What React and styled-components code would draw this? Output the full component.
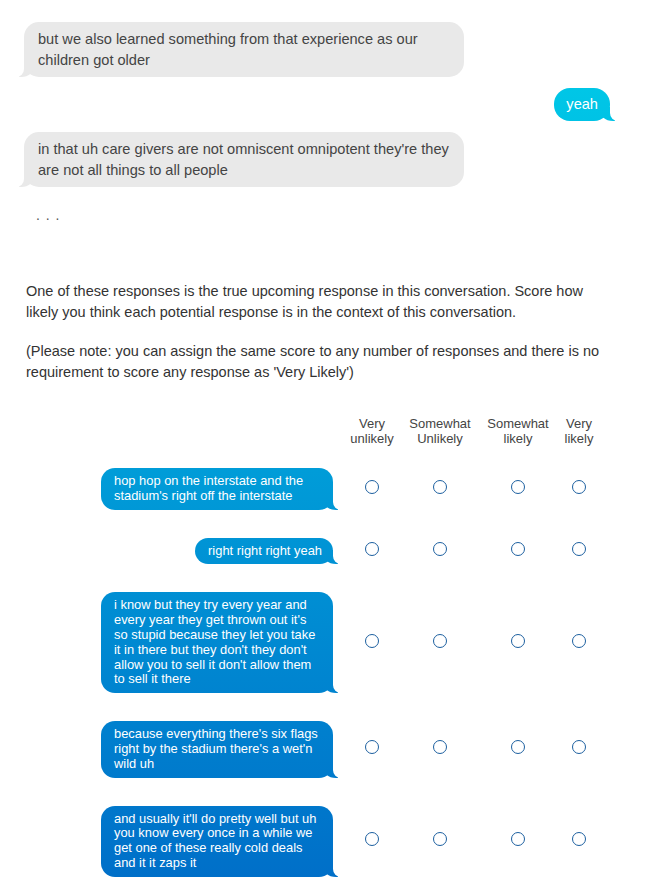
import React from "react";
import styled, { createGlobalStyle } from "styled-components";

const GlobalStyle = createGlobalStyle`
  html, body {
    margin: 0;
    padding: 0;
    background: #ffffff;
  }
  body {
    font-family: "Liberation Sans", Arial, Helvetica, sans-serif;
    color: #333333;
  }
`;

const meGradient = `linear-gradient(to bottom, #00d0ea 0px, #006ec8 888px)`;

const context = [
  { from: "them", text: "but we also learned something from that experience as our children got older" },
  { from: "me", text: "yeah" },
  { from: "them", text: "in that uh care givers are not omniscent omnipotent they're they are not all things to all people" },
];

const scale = [
  ["Very", "unlikely"],
  ["Somewhat", "Unlikely"],
  ["Somewhat", "likely"],
  ["Very", "likely"],
];

const responses = [
  "hop hop on the interstate and the stadium's right off the interstate",
  "right right right yeah",
  "i know but they try every year and every year they get thrown out it's so stupid because they let you take it in there but they don't they don't allow you to sell it don't allow them to sell it there",
  "because everything there's six flags right by the stadium there's a wet'n wild uh",
  "and usually it'll do pretty well but uh you know every once in a while we get one of these really cold deals and it it zaps it",
];

const App = () => {
  return (
    <Page>
      <GlobalStyle />
      <Chat>
        {context.map((m, i) =>
          m.from === "me" ? (
            <MeBubble key={i}>{m.text}</MeBubble>
          ) : (
            <ThemBubble key={i}>{m.text}</ThemBubble>
          )
        )}
        <Dots>. . .</Dots>
      </Chat>

      <Prompt>
        One of these responses is the true upcoming response in this
        conversation. Score how likely you think each potential response is in
        the context of this conversation.
      </Prompt>
      <Prompt>
        (Please note: you can assign the same score to any number of responses
        and there is no requirement to score any response as 'Very Likely')
      </Prompt>

      <Scale>
        <span />
        {scale.map((label, i) => (
          <HeadCell key={i}>
            {label[0]}
            <br />
            {label[1]}
          </HeadCell>
        ))}
        {responses.map((r, i) => (
          <React.Fragment key={i}>
            <BubbleCell>
              <ResponseBubble>{r}</ResponseBubble>
            </BubbleCell>
            {scale.map((_, j) => (
              <RadioCell key={j}>
                <Radio type="radio" name={`r${i}`} />
              </RadioCell>
            ))}
          </React.Fragment>
        ))}
      </Scale>
    </Page>
  );
};

export default App;

const Page = styled.div`
  width: 660px;
  box-sizing: border-box;
  padding: 22px 50px 0 24px;
`;

const Chat = styled.div`
  display: flex;
  flex-direction: column;
  gap: 11px;
`;

const Bubble = styled.div`
  position: relative;
  box-sizing: border-box;
  max-width: 440px;
  font-size: 14.6px;
  line-height: 21px;
  border-radius: 15px;
`;

const ThemBubble = styled(Bubble)`
  align-self: flex-start;
  padding: 7px 10px 6px 14px;
  background: #e9e9e9;
  color: #444444;

  &::before {
    content: "";
    position: absolute;
    z-index: 0;
    bottom: 0;
    left: -5px;
    width: 16px;
    height: 14px;
    background: #e9e9e9;
    border-bottom-right-radius: 14px 12px;
  }

  &::after {
    content: "";
    position: absolute;
    z-index: 1;
    bottom: 0;
    left: -16px;
    width: 16px;
    height: 14px;
    background: #ffffff;
    border-bottom-right-radius: 8px;
  }
`;

const meTail = `
  &::before {
    content: "";
    position: absolute;
    z-index: 0;
    bottom: 0;
    right: -5px;
    width: 16px;
    height: 14px;
    background: ${meGradient};
    background-attachment: fixed;
    border-bottom-left-radius: 14px 12px;
  }

  &::after {
    content: "";
    position: absolute;
    z-index: 1;
    bottom: 0;
    right: -16px;
    width: 16px;
    height: 14px;
    background: #ffffff;
    border-bottom-left-radius: 8px;
  }
`;

const MeBubble = styled(Bubble)`
  align-self: flex-end;
  padding: 6px 12px;
  color: #ffffff;
  background: ${meGradient};
  background-attachment: fixed;
  border-radius: 16px;
  ${meTail}
`;

const Dots = styled.div`
  margin: 7px 0 0 12px;
  font-size: 14px;
  line-height: 21px;
  letter-spacing: 1px;
  color: #555555;
`;

const Prompt = styled.p`
  margin: 0 0 18px 2px;
  font-size: 14.5px;
  line-height: 21px;
  color: #333333;

  &:first-of-type {
    margin-top: 55px;
  }
`;

const Scale = styled.div`
  display: grid;
  grid-template-columns: 319px 54px 82px 74px 48px;
  row-gap: 28px;
  margin: 33px 0 0 2px;

  & > :nth-child(-n + 5) {
    margin-bottom: -6px;
  }
`;

const HeadCell = styled.div`
  text-align: center;
  font-size: 13px;
  line-height: 15px;
  color: #444444;
`;

const BubbleCell = styled.div`
  display: flex;
  justify-content: flex-end;
  padding-right: 12px;
`;

const ResponseBubble = styled.div`
  position: relative;
  box-sizing: border-box;
  max-width: 232px;
  padding: 6px 11px 6px 13px;
  font-size: 12.9px;
  line-height: 14.8px;
  color: #ffffff;
  background: ${meGradient};
  background-attachment: fixed;
  border-radius: 14px;
  ${meTail}
`;

const RadioCell = styled.div`
  display: flex;
  align-items: center;
  justify-content: center;
`;

const Radio = styled.input`
  appearance: none;
  box-sizing: border-box;
  width: 14px;
  height: 14px;
  margin: 0 0 4px;
  border: 1.5px solid #1c5f9f;
  border-radius: 50%;
  background: #ffffff;
`;
